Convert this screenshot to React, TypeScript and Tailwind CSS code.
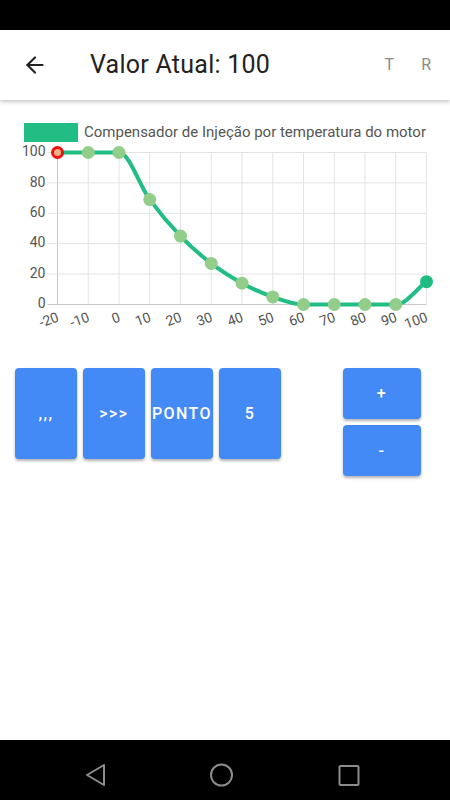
import { ArrowLeft } from 'lucide-react';

const xs = [-20, -10, 0, 10, 20, 30, 40, 50, 60, 70, 80, 90, 100];
const values = [100, 100, 100, 69, 45, 27, 14, 5, 0, 0, 0, 0, 15];
const yTicks = [0, 20, 40, 60, 80, 100];

// plot area in page pixels
const left = 57.5;
const right = 426.5;
const top = 152.5;
const bottom = 304.5;

const px = (i: number) => left + ((right - left) / (xs.length - 1)) * i;
const py = (v: number) => bottom - ((bottom - top) / 100) * v;

// monotone cubic (Fritsch-Carlson), like chart.js cubicInterpolationMode: 'monotone'
const monotonePath = (pts: { x: number; y: number }[]) => {
  const n = pts.length;
  const d: number[] = [];
  for (let i = 0; i < n - 1; i++) {
    d.push((pts[i + 1].y - pts[i].y) / (pts[i + 1].x - pts[i].x));
  }
  const m: number[] = [];
  for (let i = 0; i < n; i++) {
    if (i === 0) m.push(d[0]);
    else if (i === n - 1) m.push(d[n - 2]);
    else if (d[i - 1] * d[i] <= 0) m.push(0);
    else m.push((d[i - 1] + d[i]) / 2);
  }
  for (let i = 0; i < n - 1; i++) {
    if (d[i] === 0) {
      m[i] = 0;
      m[i + 1] = 0;
      continue;
    }
    const a = m[i] / d[i];
    const b = m[i + 1] / d[i];
    const s = a * a + b * b;
    if (s > 9) {
      const t = 3 / Math.sqrt(s);
      m[i] = t * a * d[i];
      m[i + 1] = t * b * d[i];
    }
  }
  let path = `M${pts[0].x} ${pts[0].y}`;
  for (let i = 0; i < n - 1; i++) {
    const h = (pts[i + 1].x - pts[i].x) / 3;
    path += ` C${pts[i].x + h} ${pts[i].y + m[i] * h} ${pts[i + 1].x - h} ${pts[i + 1].y - m[i + 1] * h} ${pts[i + 1].x} ${pts[i + 1].y}`;
  }
  return path;
};

const points = values.map((v, i) => ({ x: px(i), y: py(v) }));

const Chart = () => (
  <svg
    width="450"
    height="203"
    viewBox="0 142 450 203"
    className="block"
    style={{ fontFamily: 'Roboto, sans-serif' }}
  >
    {/* grid */}
    {xs.map((_, i) => (
      <line
        key={`gx${i}`}
        x1={px(i)}
        x2={px(i)}
        y1={top}
        y2={bottom}
        stroke={i === 0 ? '#c8c8c8' : '#e3e3e3'}
        strokeWidth="1"
      />
    ))}
    {yTicks.map((t) => (
      <line
        key={`gy${t}`}
        x1={left - 10}
        x2={right}
        y1={py(t)}
        y2={py(t)}
        stroke={t === 0 ? '#c8c8c8' : '#e3e3e3'}
        strokeWidth="1"
      />
    ))}
    {yTicks.map((t) => (
      <text
        key={`ly${t}`}
        x={left - 12}
        y={py(t)}
        textAnchor="end"
        dominantBaseline="middle"
        fontSize="14"
        fill="#555"
      >
        {t}
      </text>
    ))}
    {xs.map((x, i) => (
      <text
        key={`lx${x}`}
        x={0}
        y={0}
        textAnchor="end"
        dominantBaseline="middle"
        fontSize="14"
        fill="#555"
        transform={`translate(${px(i) + 1} ${bottom + 13}) rotate(-20)`}
      >
        {x}
      </text>
    ))}
    <path
      d={monotonePath(points)}
      fill="none"
      stroke="#22bd85"
      strokeWidth="4"
      strokeLinejoin="round"
    />
    {points.map((p, i) =>
      i === 0 ? (
        <circle
          key={i}
          cx={p.x}
          cy={p.y}
          r="5"
          fill="#e9b489"
          stroke="#f20f0f"
          strokeWidth="3"
        />
      ) : (
        <circle
          key={i}
          cx={p.x}
          cy={p.y}
          r="6.5"
          fill={i === points.length - 1 ? '#1fbc82' : '#92ce8a'}
        />
      ),
    )}
  </svg>
);

const Btn = ({ label, className }: { label: string; className: string }) => (
  <button
    className={`flex items-center justify-center rounded-[4px] bg-[#448af7] text-[16px] font-medium tracking-[0.09em] text-white shadow-[0_2px_3px_rgba(0,0,0,0.3)] ${className}`}
  >
    {label}
  </button>
);

export default function App() {
  return (
    <div
      className="flex h-[800px] w-[450px] flex-col overflow-hidden bg-white"
      style={{ fontFamily: 'Roboto, "Noto Sans", sans-serif' }}
    >
      <div className="h-[30px] bg-black" />

      <header className="relative z-10 flex h-[70px] items-center bg-white shadow-[0_2px_4px_rgba(0,0,0,0.22)]">
        <ArrowLeft className="ml-[22px] h-[26px] w-[26px] text-[#222]" strokeWidth={2} />
        <h1 className="ml-[42px] text-[25px] font-normal tracking-[0.01em] text-[#222]">
          Valor Atual: 100
        </h1>
        <div className="ml-auto mr-[19px] flex gap-[27px] text-[16px] font-normal text-[#8a8a8a]">
          <span>T</span>
          <span>R</span>
        </div>
      </header>

      <main className="flex-1">
        <div className="mt-[23px] flex h-[19px] items-center pl-[24px]">
          <div className="h-[19px] w-[54px] bg-[#22bd85]" />
          <span className="ml-[6px] text-[15px] text-[#555]">
            Compensador de Injeção por temperatura do motor
          </span>
        </div>

        <Chart />

        <div className="mt-[23px] flex pl-[15px] pr-[29px]">
          <div className="flex gap-[6px]">
            <Btn label=",,," className="h-[91px] w-[62px]" />
            <Btn label=">>>" className="h-[91px] w-[62px]" />
            <Btn label="PONTO" className="h-[91px] w-[62px]" />
            <Btn label="5" className="h-[91px] w-[62px]" />
          </div>
          <div className="ml-auto flex flex-col gap-[6px]">
            <Btn label="+" className="h-[51px] w-[78px]" />
            <Btn label="-" className="h-[51px] w-[78px]" />
          </div>
        </div>
      </main>

      <nav className="flex h-[60px] items-center bg-black">
        <svg width="450" height="60" viewBox="0 0 450 60" fill="none" stroke="#8c8c8c" strokeWidth="2">
          <path d="M104 25 L87 35 L104 45 Z" strokeLinejoin="round" />
          <circle cx="221.5" cy="35" r="10.5" />
          <rect x="339.5" y="26" width="19" height="19" rx="1" />
        </svg>
      </nav>
    </div>
  );
}
